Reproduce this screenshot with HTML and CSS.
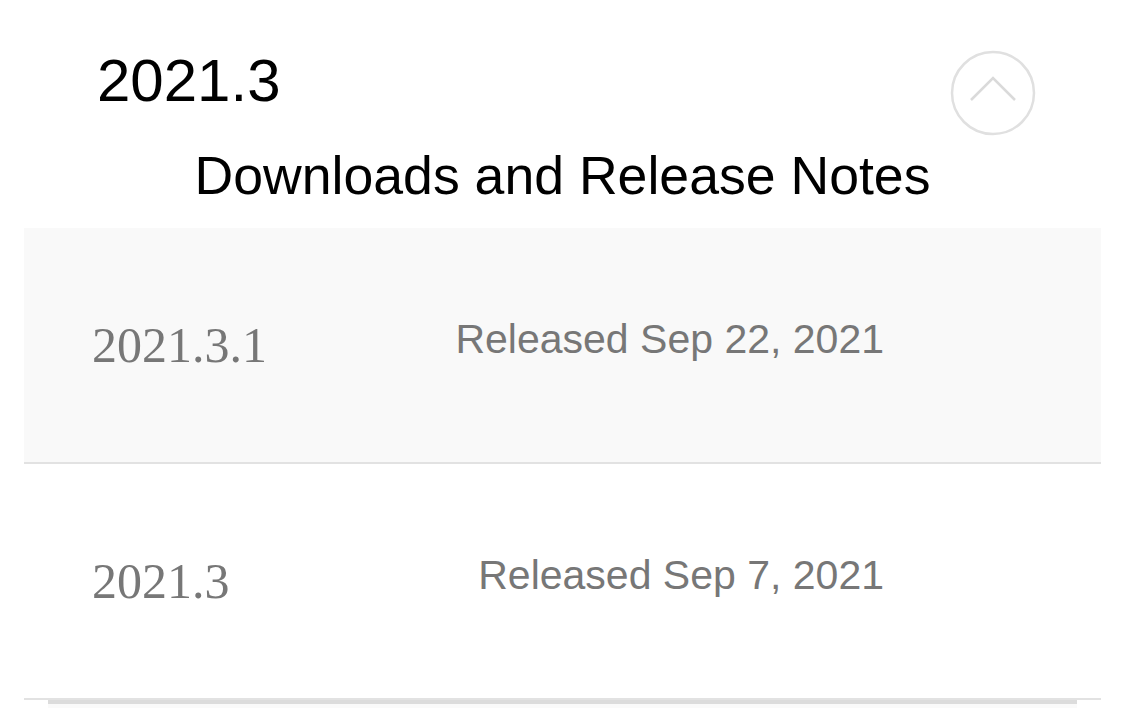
FILE: index.html
```html
<!DOCTYPE html>
<html lang="en">
<head>
  <meta charset="UTF-8" />
  <meta name="viewport" content="width=device-width, initial-scale=1.0" />
  <title>2021.3 | Downloads and Release Notes</title>
  <link rel="stylesheet" href="styles.css">
</head>
<body>
  <section class="release">
    <div class="release-head">
      <h1>2021.3</h1>
      <button class="toggle-btn" aria-label="Collapse">
        <svg width="86" height="86" viewBox="0 0 86 86">
          <circle cx="43" cy="43" r="41" fill="none" stroke="#e0e0e0" stroke-width="2.5" />
          <polyline points="21,50 43,28 65,50" fill="none" stroke="#dadada" stroke-width="2.5" />
        </svg>
      </button>
    </div>

    <h2 class="release-title">Downloads and Release Notes</h2>

    <ul class="version-list">
      <li class="version-row active">
        <span class="version">2021.3.1</span>
        <span class="date">Released Sep 22, 2021</span>
      </li>
      <li class="version-row">
        <span class="version">2021.3</span>
        <span class="date">Released Sep 7, 2021</span>
      </li>
    </ul>
    <div class="list-edge"></div>
  </section>
</body>
</html>
```

FILE: styles.css
```css
body {
  margin: 0;
  font-family: "Liberation Sans", Arial, sans-serif;
  background: white;
  color: black;
}

.release-head {
  display: flex;
  justify-content: space-between;
  align-items: flex-start;
  padding: 50px 89px 0 97px;
}

.release-head h1 {
  margin: 1px 0 0;
  font-size: 60px;
  font-weight: normal;
  line-height: 1;
}

.toggle-btn {
  padding: 0;
  border: none;
  background: none;
  cursor: pointer;
  line-height: 0;
}

.release-title {
  margin: 13px 0 25px;
  text-align: center;
  font-size: 53.6px;
  font-weight: normal;
  line-height: 1;
}

.version-list {
  list-style: none;
  margin: 0 24px;
  padding: 0;
}

.version-row {
  display: flex;
  align-items: center;
  height: 234px;
  padding: 0 217px 0 68px;
  border-bottom: 2px solid #e2e2e2;
}

.version-row.active {
  background: #f9f9f9;
}

.version {
  font-family: "Liberation Serif", Georgia, serif;
  font-variant-numeric: oldstyle-nums;
  font-size: 50px;
  line-height: 1;
  color: #777;
}

.date {
  margin-left: auto;
  margin-bottom: 10px;
  font-size: 41px;
  line-height: 1;
  color: #777;
}

.list-edge {
  margin: 0 48px;
  height: 4px;
  background: #dcdcdc;
  border-bottom: 4px solid #fafafa;
}
```
